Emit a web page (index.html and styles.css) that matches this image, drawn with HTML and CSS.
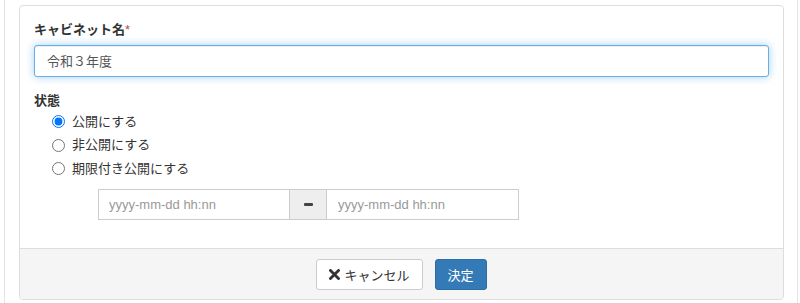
FILE: index.html
```html
<!DOCTYPE html>
<html lang='ja'>
<head>
  <meta charset='utf-8'>
  <title>キャビネット編集</title>
  <link rel="stylesheet" href="styles.css">
</head>
<body>
  <div class='wrapper'>
    <div class='panel'>
      <div class='panel-body'>
        <!-- Cabinet name -->
        <div class='form-group'>
          <label class='control-label' for='cabinetName'>キャビネット名<span class='required'>*</span></label>
          <input type='text' id='cabinetName' class='form-control is-focused' value='令和３年度'>
        </div>

        <!-- Status -->
        <div class='form-group last'>
          <div class='control-label'>状態</div>
          <label class='radio-row'><input type='radio' name='status' checked> 公開にする</label>
          <label class='radio-row'><input type='radio' name='status'> 非公開にする</label>
          <label class='radio-row'><input type='radio' name='status'> 期限付き公開にする</label>

          <div class='date-group'>
            <input type='text' class='date-input' placeholder='yyyy-mm-dd hh:nn'>
            <span class='date-addon'><span class='dash'></span></span>
            <input type='text' class='date-input' placeholder='yyyy-mm-dd hh:nn'>
          </div>
        </div>
      </div>

      <div class='panel-footer'>
        <button class='btn btn-default'>
          <svg class='icon-remove' width='11' height='11' viewBox='0 0 11 11'>
            <path d='M1.5 1.5 L9.5 9.5 M9.5 1.5 L1.5 9.5' stroke='#333' stroke-width='2.8' stroke-linecap='square'/>
          </svg>
          キャンセル
        </button>
        <button class='btn btn-primary'>決定</button>
      </div>
    </div>
  </div>
</body>
</html>
```

FILE: styles.css
```css
html, body {
  height: 100%;
}

body {
  margin: 0;
  background-color: #fff;
  color: #333;
  font-family: 'Liberation Sans', 'Noto Sans CJK JP', sans-serif;
  font-size: 13px;
  line-height: 1.42857;
}

.wrapper {
  box-sizing: border-box;
  width: 794px;
  min-height: 100%;
  margin-left: 4px;
  padding-top: 5px;
  border-left: 1px solid #e3e3e3;
  border-right: 1px solid #e3e3e3;
}

.panel {
  margin: 0 13px 0 14px;
  border: 1px solid #ddd;
  border-radius: 4px;
  background-color: #fff;
}

.panel-body {
  padding: 15px 14px 14px;
}

.form-group {
  margin-bottom: 15px;
}

.form-group.last {
  margin-bottom: 14px;
}

.control-label {
  display: block;
  font-weight: bold;
  margin-bottom: 5px;
}

.required {
  color: #b94a48;
  font-weight: normal;
}

.form-control {
  box-sizing: border-box;
  display: block;
  width: 100%;
  height: 32px;
  padding: 6px 12px;
  border: 1px solid #ccc;
  border-radius: 3px;
  font-family: inherit;
  font-size: 13px;
  color: #555;
  outline: none;
}

.form-control.is-focused {
  border-color: #66afe9;
  box-shadow: inset 0 1px 1px rgba(0, 0, 0, .075), 0 0 8px rgba(102, 175, 233, .6);
}

.form-group.last .control-label {
  margin-bottom: 0;
}

.radio-row {
  display: flex;
  align-items: center;
  height: 23.5px;
  padding-left: 18px;
  cursor: pointer;
}

.radio-row input {
  width: 13px;
  height: 13px;
  margin: 0 7px 0 0;
}

.date-group {
  display: flex;
  margin: 8px 0 0 64px;
  width: 421px;
}

.date-input {
  box-sizing: border-box;
  width: 192px;
  height: 31px;
  padding: 6px 10px;
  border: 1px solid #ccc;
  border-radius: 0;
  font-family: inherit;
  font-size: 13px;
  color: #555;
}

.date-input:last-child {
  width: 193px;
  padding-left: 11px;
}

.date-input::placeholder {
  color: #999;
}

.date-addon {
  box-sizing: border-box;
  display: flex;
  align-items: center;
  justify-content: center;
  width: 36px;
  height: 31px;
  background-color: #eee;
  border-top: 1px solid #ccc;
  border-bottom: 1px solid #ccc;
}

.dash {
  width: 9px;
  height: 3px;
  border-radius: 1px;
  background-color: #444;
}

.panel-footer {
  display: flex;
  justify-content: center;
  gap: 12px;
  padding: 10px 15px 9px;
  background-color: #f5f5f5;
  border-top: 1px solid #ddd;
  border-radius: 0 0 3px 3px;
}

.btn {
  display: inline-flex;
  align-items: center;
  gap: 4px;
  height: 31px;
  padding: 0 12px;
  border: 1px solid transparent;
  border-radius: 3px;
  font-family: inherit;
  font-size: 13px;
  cursor: pointer;
}

.btn-default {
  background-color: #fff;
  border-color: #ccc;
  color: #333;
}

.btn-primary {
  background-color: #337ab7;
  border-color: #2e6da4;
  color: #fff;
}

.icon-remove {
  display: block;
}
```
